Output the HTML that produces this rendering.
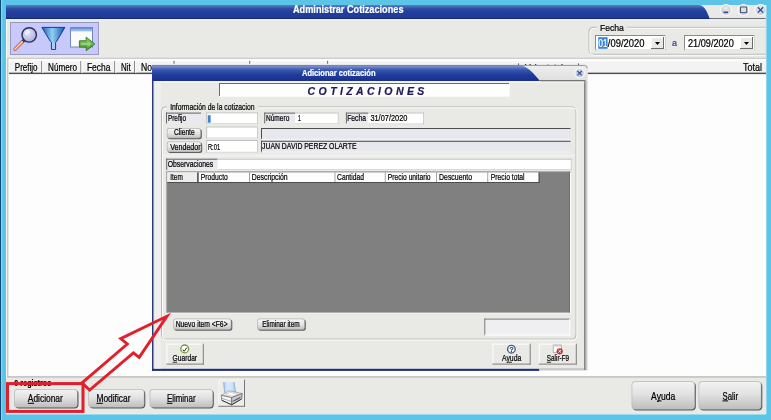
<!DOCTYPE html>
<html><head><meta charset="utf-8"><title>Administrar Cotizaciones</title>
<style>
html,body{margin:0;padding:0;width:771px;height:420px;overflow:hidden;background:#5cc5e7}
svg{display:block;position:absolute;left:0;top:0;will-change:transform}
text{font-family:"Liberation Sans",sans-serif;white-space:pre;stroke:currentColor;stroke-width:0.22px}
</style></head><body>
<svg width="771" height="420" viewBox="0 0 771 420">
<defs>
<linearGradient id="gtb" x1="0" y1="0" x2="0" y2="1"><stop offset="0" stop-color="#5e80be"/><stop offset="0.28" stop-color="#2b4ba4"/><stop offset="0.5" stop-color="#203e9c"/><stop offset="0.88" stop-color="#203c98"/><stop offset="1" stop-color="#12226a"/></linearGradient>
<linearGradient id="gdtb" x1="0" y1="0" x2="0" y2="1"><stop offset="0" stop-color="#5476c8"/><stop offset="0.4" stop-color="#22409e"/><stop offset="1" stop-color="#1b3694"/></linearGradient>
<linearGradient id="gbtn" x1="0" y1="0" x2="0" y2="1"><stop offset="0" stop-color="#f6f6f6"/><stop offset="0.5" stop-color="#e6e6e6"/><stop offset="1" stop-color="#c4c4c4"/></linearGradient>
<linearGradient id="gbig" x1="0" y1="0" x2="0" y2="1"><stop offset="0" stop-color="#f2f2f2"/><stop offset="0.45" stop-color="#e2e2e2"/><stop offset="1" stop-color="#bebebe"/></linearGradient>
<linearGradient id="gfun" x1="0" y1="0" x2="1" y2="0"><stop offset="0" stop-color="#1c5cb4"/><stop offset="0.45" stop-color="#8fd0f4"/><stop offset="1" stop-color="#1a4fa8"/></linearGradient>
<linearGradient id="garr" x1="0" y1="0" x2="0" y2="1"><stop offset="0" stop-color="#8ed06a"/><stop offset="1" stop-color="#3d9a2c"/></linearGradient>
<radialGradient id="glens" cx="0.4" cy="0.35" r="0.75"><stop offset="0" stop-color="#e4e4fa"/><stop offset="1" stop-color="#a6a8dc"/></radialGradient>
<radialGradient id="gcirc" cx="0.5" cy="0.35" r="0.65"><stop offset="0" stop-color="#ececec"/><stop offset="1" stop-color="#c6c6c6"/></radialGradient>
</defs>

<rect x="0" y="0" width="771" height="420" fill="#5cc5e7" />
<rect x="0" y="0" width="1" height="420" fill="#0c4c74" />
<rect x="1" y="0" width="1.2" height="420" fill="#84d6f2" />
<rect x="6" y="5" width="760" height="409" fill="#e9e9e6" />
<rect x="6" y="5" width="760" height="14" fill="url(#gtb)" />
<path d="M699.5 5 C705 6 707 12 710 19 L766 19 L766 5 Z" fill="#e9e9e9"/>
<rect x="710" y="18" width="56" height="1" fill="#6e6e6e" />
<text x="293" y="12.8" font-size="11" fill="#fff" color="#fff" font-weight="bold" font-style="normal" text-anchor="start" textLength="110.5" lengthAdjust="spacingAndGlyphs" >Administrar Cotizaciones</text>
<circle cx="726" cy="10" r="5.5" fill="url(#gcirc)" stroke="#fbfbfb" stroke-width="1.2"/>
<rect x="723.5" y="11.5" width="4.5" height="1.6" fill="#3a4a9a" />
<circle cx="743.5" cy="10" r="5.5" fill="url(#gcirc)" stroke="#fbfbfb" stroke-width="1.2"/>
<rect x="740.5" y="7" width="6.2" height="5.6" fill="#dcdce4" stroke="#4c5478" stroke-width="1"/>
<circle cx="760.5" cy="10" r="5.5" fill="url(#gcirc)" stroke="#fbfbfb" stroke-width="1.2"/>
<path d="M757.9 7.2 L763.1 12.6 M763.1 7.2 L757.9 12.6" stroke="#3646a0" stroke-width="1.3" fill="none"/>
<rect x="6" y="19" width="760" height="2" fill="#e8eef8" />
<rect x="6" y="413" width="760" height="1.4" fill="#f4fafc" />
<rect x="10" y="22" width="89" height="33" fill="#c8c9fb" />
<rect x="10.5" y="22.5" width="88" height="32" fill="none" stroke="#9a9ac0"/>
<path d="M23.2 41 L15 49.3" stroke="#b0644c" stroke-width="3.4" stroke-linecap="round"/>
<path d="M23.2 41 L15 49.3" stroke="#f2a48c" stroke-width="2.2" stroke-linecap="round"/>
<path d="M24.6 39.6 L22.6 41.6" stroke="#3a3a5a" stroke-width="3"/>
<path d="M22.8 41.2 L15.2 48.9" stroke="#fcdccc" stroke-width="0.8" stroke-linecap="round"/>
<circle cx="29.2" cy="34.9" r="7.2" fill="url(#glens)" stroke="#2e2e5e" stroke-width="1.4"/>
<ellipse cx="27.3" cy="32.4" rx="3" ry="2" fill="#ffffff" opacity="0.55" transform="rotate(-35 27.3 32.4)"/>
<path d="M41.9 27.4 L64.9 27.4 L56.6 41.4 L55.6 42.3 L55.6 49.4 L51.4 49.4 L51.4 42.3 L50.4 41.4 Z" fill="url(#gfun)" stroke="#16389a" stroke-width="1"/>
<rect x="52" y="42.6" width="3" height="6.3" fill="#a8d0f4"/>
<rect x="70.5" y="27.5" width="22" height="19.5" fill="#fbfcff" stroke="#6f88c4" stroke-width="1"/>
<rect x="71" y="28" width="21" height="1.8" fill="#6e98d2" />
<rect x="71" y="29.8" width="21" height="1.6" fill="#9dbce6" />
<path d="M79.4 40.8 L86.2 40.8 L86.2 37.2 L94.8 44 L86.2 50.7 L86.2 47.1 L79.4 47.1 Z" fill="url(#garr)" stroke="#3c7c2c" stroke-width="1"/>
<path d="M81 43 L87.5 43 L87.5 41 L91.5 44 L87.5 47 L87.5 45 L81 45 Z" fill="#a4d488" opacity="0.8"/>
<rect x="589" y="27.3" width="190" height="27" rx="4" fill="none" stroke="#b4b4b4"/>
<rect x="590" y="28.3" width="190" height="27" rx="4" fill="none" stroke="#fbfbfb"/>
<rect x="766" y="0" width="5" height="420" fill="#5cc5e7" />
<rect x="765.6" y="5" width="0.9" height="409" fill="#bfe6f4" />
<rect x="597" y="22" width="30" height="10" fill="#e9e9e6" />
<text x="599.9" y="31.4" font-size="9.8" fill="#000" color="#000" font-weight="normal" font-style="normal" text-anchor="start" textLength="24" lengthAdjust="spacingAndGlyphs" >Fecha</text>
<rect x="595" y="35" width="71" height="15.4" fill="#fff" />
<rect x="595" y="35" width="71" height="1" fill="#8a8a8a" />
<rect x="595" y="35" width="1" height="15.4" fill="#8a8a8a" />
<rect x="595" y="49.4" width="71" height="1" fill="#d6d6d6" />
<rect x="665" y="35" width="1" height="15.4" fill="#d6d6d6" />
<rect x="651" y="37" width="13" height="12" fill="#e9e9e6" />
<rect x="651" y="37" width="13" height="1" fill="#fff" />
<rect x="651" y="37" width="1" height="12" fill="#fff" />
<rect x="651" y="48" width="13" height="1" fill="#6a6a6a" />
<rect x="663" y="37" width="1" height="12" fill="#6a6a6a" />
<path d="M655 42 L660 42 L657.5 45 Z" fill="#000"/>
<rect x="598.2" y="37.2" width="9.4" height="11.6" fill="#3f86d4" />
<text x="598.6" y="46.9" font-size="10" fill="#fff" color="#fff" font-weight="normal" font-style="normal" text-anchor="start" textLength="8.8" lengthAdjust="spacingAndGlyphs" >01</text>
<text x="607.8" y="46.9" font-size="10" fill="#000" color="#000" font-weight="normal" font-style="normal" text-anchor="start" textLength="36.7" lengthAdjust="spacingAndGlyphs" >/09/2020</text>
<rect x="684" y="35" width="71" height="15.4" fill="#fff" />
<rect x="684" y="35" width="71" height="1" fill="#8a8a8a" />
<rect x="684" y="35" width="1" height="15.4" fill="#8a8a8a" />
<rect x="684" y="49.4" width="71" height="1" fill="#d6d6d6" />
<rect x="754" y="35" width="1" height="15.4" fill="#d6d6d6" />
<rect x="740" y="37" width="13" height="12" fill="#e9e9e6" />
<rect x="740" y="37" width="13" height="1" fill="#fff" />
<rect x="740" y="37" width="1" height="12" fill="#fff" />
<rect x="740" y="48" width="13" height="1" fill="#6a6a6a" />
<rect x="752" y="37" width="1" height="12" fill="#6a6a6a" />
<path d="M744 42 L749 42 L746.5 45 Z" fill="#000"/>
<text x="688" y="46.9" font-size="10" fill="#000" color="#000" font-weight="normal" font-style="normal" text-anchor="start" textLength="45.8" lengthAdjust="spacingAndGlyphs" >21/09/2020</text>
<text x="672" y="46" font-size="9.5" fill="#3a3aa8" color="#3a3aa8" font-weight="normal" font-style="normal" text-anchor="start" textLength="5" lengthAdjust="spacingAndGlyphs" stroke-width="0">a</text>
<rect x="8" y="58" width="758" height="319" fill="#fdfdfd" />
<rect x="8" y="57.8" width="758" height="0.9" fill="#b8b8b8" />
<rect x="7.4" y="58" width="0.9" height="319" fill="#b4b4b4" />
<rect x="6" y="19" width="1" height="394" fill="#f6fafa" />
<rect x="9" y="60.8" width="757" height="12.4" fill="#f3f3f3" />
<rect x="9" y="60.6" width="757" height="0.8" fill="#ffffff" />
<rect x="9" y="72.2" width="757" height="0.8" fill="#a8a8a8" />
<rect x="9" y="73" width="757" height="1.1" fill="#4e4e4e" />
<rect x="41.3" y="61" width="1" height="12" fill="#6e6e6e" />
<rect x="42.3" y="61" width="1" height="12" fill="#fff" />
<rect x="80.4" y="61" width="1" height="12" fill="#6e6e6e" />
<rect x="81.4" y="61" width="1" height="12" fill="#fff" />
<rect x="114.3" y="61" width="1" height="12" fill="#6e6e6e" />
<rect x="115.3" y="61" width="1" height="12" fill="#fff" />
<rect x="134.2" y="61" width="1" height="12" fill="#6e6e6e" />
<rect x="135.2" y="61" width="1" height="12" fill="#fff" />
<text x="14.8" y="70.5" font-size="10.5" fill="#000" color="#000" font-weight="normal" font-style="normal" text-anchor="start" textLength="22.8" lengthAdjust="spacingAndGlyphs" >Prefijo</text>
<text x="48" y="70.5" font-size="10.5" fill="#000" color="#000" font-weight="normal" font-style="normal" text-anchor="start" textLength="29" lengthAdjust="spacingAndGlyphs" >Número</text>
<text x="86.9" y="70.5" font-size="10.5" fill="#000" color="#000" font-weight="normal" font-style="normal" text-anchor="start" textLength="23.5" lengthAdjust="spacingAndGlyphs" >Fecha</text>
<text x="121" y="70.5" font-size="10.5" fill="#000" color="#000" font-weight="normal" font-style="normal" text-anchor="start" textLength="9.7" lengthAdjust="spacingAndGlyphs" >Nit</text>
<text x="141" y="70.5" font-size="10.5" fill="#000" color="#000" font-weight="normal" font-style="normal" text-anchor="start" textLength="11" lengthAdjust="spacingAndGlyphs" >No</text>
<text x="743" y="70.5" font-size="10.5" fill="#000" color="#000" font-weight="normal" font-style="normal" text-anchor="start" textLength="19" lengthAdjust="spacingAndGlyphs" >Total</text>
<rect x="6" y="377" width="760" height="37" fill="#e9e9e6" />
<rect x="7.4" y="376.4" width="758.6" height="1" fill="#a6a6a6" />
<text x="14.3" y="386.4" font-size="9.6" fill="#000" color="#000" font-weight="bold" font-style="normal" text-anchor="start" textLength="37" lengthAdjust="spacingAndGlyphs" >0 registros</text>
<rect x="15" y="390" width="63.5" height="18.6" rx="4" fill="#565656"/>
<rect x="14" y="389" width="63.5" height="18.6" rx="3.6" fill="#b8b8b8"/>
<rect x="14.7" y="389.7" width="62.3" height="17.400000000000002" rx="3.2" fill="url(#gbig)"/>
<text x="27.8" y="402" font-size="10.5" fill="#000" color="#000" font-weight="normal" font-style="normal" text-anchor="start" textLength="35" lengthAdjust="spacingAndGlyphs" >Adicionar</text>
<rect x="27.8" y="402.8" width="6.3" height="1" fill="#000" />
<rect x="89.3" y="390" width="56" height="18.6" rx="4" fill="#565656"/>
<rect x="88.3" y="389" width="56" height="18.6" rx="3.6" fill="#b8b8b8"/>
<rect x="89.0" y="389.7" width="54.8" height="17.400000000000002" rx="3.2" fill="url(#gbig)"/>
<text x="96.4" y="402" font-size="10.5" fill="#000" color="#000" font-weight="normal" font-style="normal" text-anchor="start" textLength="34.1" lengthAdjust="spacingAndGlyphs" >Modificar</text>
<rect x="96.4" y="402.8" width="6.5" height="1" fill="#000" />
<rect x="150.6" y="390" width="63.2" height="18.6" rx="4" fill="#565656"/>
<rect x="149.6" y="389" width="63.2" height="18.6" rx="3.6" fill="#b8b8b8"/>
<rect x="150.29999999999998" y="389.7" width="62.0" height="17.400000000000002" rx="3.2" fill="url(#gbig)"/>
<text x="166.9" y="402" font-size="10.5" fill="#000" color="#000" font-weight="normal" font-style="normal" text-anchor="start" textLength="28.7" lengthAdjust="spacingAndGlyphs" >Eliminar</text>
<rect x="166.9" y="402.8" width="5.6" height="1" fill="#000" />
<rect x="632.6" y="382.2" width="63.2" height="28.2" rx="4" fill="#565656"/>
<rect x="631.6" y="381.2" width="63.2" height="28.2" rx="3.6" fill="#b8b8b8"/>
<rect x="632.3000000000001" y="381.9" width="62.0" height="27.0" rx="3.2" fill="url(#gbig)"/>
<text x="651.1" y="399.6" font-size="10.5" fill="#000" color="#000" font-weight="normal" font-style="normal" text-anchor="start" textLength="24.1" lengthAdjust="spacingAndGlyphs" >Ayuda</text>
<rect x="657.3000000000001" y="400.40000000000003" width="4.2" height="1" fill="#000" />
<rect x="699.5" y="382.2" width="62.8" height="28.2" rx="4" fill="#565656"/>
<rect x="698.5" y="381.2" width="62.8" height="28.2" rx="3.6" fill="#b8b8b8"/>
<rect x="699.2" y="381.9" width="61.599999999999994" height="27.0" rx="3.2" fill="url(#gbig)"/>
<text x="722.5" y="399.6" font-size="10.5" fill="#000" color="#000" font-weight="normal" font-style="normal" text-anchor="start" textLength="15.5" lengthAdjust="spacingAndGlyphs" >Salir</text>
<rect x="722.5" y="400.40000000000003" width="5.6" height="1" fill="#000" />
<rect x="218.4" y="379.6" width="26.6" height="27" fill="#ededeb" />
<rect x="218.4" y="379.6" width="26.6" height="0.8" fill="#f8f8f8" />
<rect x="218.4" y="379.6" width="0.8" height="27" fill="#f8f8f8" />
<rect x="218.4" y="405.8" width="26.6" height="0.9" fill="#6a6a6a" />
<rect x="244.1" y="379.6" width="0.9" height="27" fill="#6a6a6a" />
<linearGradient id="gpap" x1="0" y1="0" x2="1" y2="0"><stop offset="0" stop-color="#a9c8ea"/><stop offset="0.3" stop-color="#d6e9fb"/><stop offset="0.7" stop-color="#cfe4f9"/><stop offset="1" stop-color="#a4c4e8"/></linearGradient>
<path d="M223.6 382.2 L234 382.2 L235.6 392.5 L224.6 393 Z" fill="url(#gpap)"/>
<path d="M223.6 382.2 L224.6 392.5 M234 382.2 L235.5 392" fill="none" stroke="#86a6cc" stroke-width="0.8"/>
<path d="M221.3 395.3 L229 390.8 L242.2 393.5 L231.7 397.6 Z" fill="#e9e9e9" stroke="#8a8a8a" stroke-width="0.6"/>
<path d="M225.6 394.6 L229.6 392.3 L238.2 394 L232.6 396.2 Z" fill="#fbfbfb" stroke="#b0b0b0" stroke-width="0.4"/>
<path d="M221.3 395.3 L231.7 397.6 L231.7 404.8 L221.8 400.3 Z" fill="#f6f6f6" stroke="#5a5a5a" stroke-width="0.7"/>
<path d="M231.7 397.6 L242.2 393.5 L241.7 398.9 L231.7 404.8 Z" fill="#c9c9c9" stroke="#5a5a5a" stroke-width="0.7"/>
<path d="M221.8 400.3 L231.7 404.8 L241.7 398.9" fill="none" stroke="#333" stroke-width="0.9"/>
<path d="M222 398.3 L231.7 401.6 L242 396.4" fill="none" stroke="#7a7a7a" stroke-width="0.6"/>
<path d="M233.5 401.2 L240 397.6" stroke="#444" stroke-width="0.9"/>
<rect x="173.6" y="60.8" width="0.9" height="3" fill="#5a5a5a" />
<rect x="249.3" y="60.8" width="0.9" height="3" fill="#5a5a5a" />
<rect x="327.2" y="60.8" width="0.9" height="3" fill="#5a5a5a" />
<rect x="518" y="63.4" width="0.9" height="2.2" fill="#4a4a4a" />
<rect x="578" y="63.4" width="0.9" height="2.2" fill="#4a4a4a" />
<text x="525" y="71.6" font-size="10.5" fill="#000" color="#000" font-weight="normal" font-style="normal" text-anchor="start" textLength="38" lengthAdjust="spacingAndGlyphs" >Valor total</text>
<rect x="152" y="65" width="435.5" height="306" fill="#e9e9e6" />
<path d="M152 65 L584.5 65 Q587.5 65 587.5 68 L587.5 371 L152 371 Z" fill="#e9e9e6"/>
<linearGradient id="gdt2" x1="0" y1="0" x2="0" y2="1"><stop offset="0" stop-color="#8fa1d4"/><stop offset="0.3" stop-color="#3a59b0"/><stop offset="0.6" stop-color="#1f3d9e"/><stop offset="1" stop-color="#1a3088"/></linearGradient>
<linearGradient id="ggray" x1="0" y1="0" x2="0" y2="1"><stop offset="0" stop-color="#efefef"/><stop offset="1" stop-color="#dedede"/></linearGradient>
<rect x="152" y="65" width="388" height="16" fill="url(#gdt2)" />
<path d="M517.5 65 C528 65.5 533 73 540 81 L587.5 81 L587.5 68 Q587.5 65 584.5 65 Z" fill="url(#ggray)"/>
<path d="M152 65.4 L584.5 65.4 Q587.2 65.4 587.2 68.4" fill="none" stroke="#7a7c84" stroke-width="0.8"/>
<rect x="540" y="80.2" width="45.5" height="1.3" fill="#5e5e5e" />
<text x="302" y="76.2" font-size="9" fill="#fff" color="#fff" font-weight="bold" font-style="normal" text-anchor="start" textLength="73.5" lengthAdjust="spacingAndGlyphs" >Adicionar cotización</text>
<circle cx="579.6" cy="73.2" r="4.8" fill="#c6d0e2" stroke="#f8f8f8" stroke-width="1.2"/>
<path d="M577.4 71 L581.8 75.4 M581.8 71 L577.4 75.4" stroke="#3c4c8c" stroke-width="1.1" fill="none"/>
<rect x="152" y="81" width="1.5" height="290" fill="#2a3a78" />
<rect x="153.5" y="81" width="0.8" height="288" fill="#9aa2b8" />
<rect x="152" y="368.8" width="387.3" height="2.1" fill="#1d3080" />
<rect x="539.3" y="368.2" width="46" height="2" fill="#c6c6c6" />
<rect x="584.1" y="81" width="1.3" height="289" fill="#7a7a7a" />
<rect x="585.4" y="81" width="1.2" height="289" fill="#a0a0a0" />
<rect x="586.6" y="81" width="1" height="289" fill="#dcdce2" />
<rect x="154.3" y="81.5" width="430" height="1" fill="#fbfbfb" />
<rect x="154.3" y="82.5" width="6.4" height="286" fill="#efefee" />
<rect x="219" y="83" width="291" height="14" fill="#fff" />
<rect x="219" y="83" width="291" height="1" fill="#6a6a6a" />
<rect x="219" y="83" width="1" height="14" fill="#6a6a6a" />
<rect x="219" y="96" width="291" height="1" fill="#f8f8f8" />
<rect x="509" y="83" width="1" height="14" fill="#f8f8f8" />
<text x="307.6" y="94.9" font-size="10.5" fill="#1c1c5c" color="#1c1c5c" font-weight="bold" font-style="italic" text-anchor="start" letter-spacing="3.4">COTIZACIONES</text>
<rect x="161.5" y="106.9" width="414.5" height="232.2" rx="4" fill="none" stroke="#b8b8b8"/>
<rect x="162.5" y="107.9" width="414.5" height="232.2" rx="4" fill="none" stroke="#fcfcfc"/>
<rect x="162.5" y="154.6" width="412" height="2.2" fill="#f1f1ef" />
<rect x="167" y="101" width="91" height="10" fill="#e9e9e6" />
<text x="170.2" y="109.8" font-size="8.6" fill="#000" color="#000" font-weight="normal" font-style="normal" text-anchor="start" textLength="84.4" lengthAdjust="spacingAndGlyphs" >Información de la cotizacion</text>
<rect x="166" y="112.6" width="35" height="10.8" fill="#eaeaee" />
<rect x="166" y="112.6" width="35" height="1" fill="#606060" />
<rect x="166" y="112.6" width="1" height="10.8" fill="#686868" />
<text x="167.9" y="120.8" font-size="8.6" fill="#000" color="#000" font-weight="normal" font-style="normal" text-anchor="start" textLength="18.2" lengthAdjust="spacingAndGlyphs" >Prefijo</text>
<rect x="206.3" y="112.5" width="51.5" height="11.6" fill="#fff" />
<rect x="206.3" y="112.5" width="51.5" height="0.8" fill="#b4b4b4" />
<rect x="206.3" y="112.5" width="0.8" height="11.6" fill="#b4b4b4" />
<rect x="206.3" y="123.3" width="51.5" height="0.8" fill="#d0d0d0" />
<rect x="257.0" y="112.5" width="0.8" height="11.6" fill="#c4c4c4" />
<rect x="207.8" y="115.2" width="2.8" height="7.5" fill="#3f7fd0" />
<rect x="264.2" y="112.6" width="31" height="10.8" fill="#eaeaee" />
<rect x="264.2" y="112.6" width="31" height="1" fill="#606060" />
<rect x="264.2" y="112.6" width="1" height="10.8" fill="#686868" />
<text x="266" y="120.8" font-size="8.6" fill="#000" color="#000" font-weight="normal" font-style="normal" text-anchor="start" textLength="23.3" lengthAdjust="spacingAndGlyphs" >Número</text>
<rect x="295" y="112.6" width="43.6" height="11.5" fill="#fff" />
<rect x="295" y="112.6" width="43.6" height="0.8" fill="#b4b4b4" />
<rect x="295" y="123.3" width="43.6" height="0.8" fill="#d0d0d0" />
<rect x="337.8" y="112.6" width="0.8" height="11.5" fill="#c4c4c4" />
<text x="298" y="121.4" font-size="8.6" fill="#000" color="#000" font-weight="normal" font-style="normal" text-anchor="start" textLength="2.8" lengthAdjust="spacingAndGlyphs" >1</text>
<rect x="345.9" y="112.6" width="22.3" height="10.8" fill="#eaeaee" />
<rect x="345.9" y="112.6" width="22.3" height="1" fill="#606060" />
<rect x="345.9" y="112.6" width="1" height="10.8" fill="#686868" />
<text x="347.2" y="120.8" font-size="8.6" fill="#000" color="#000" font-weight="normal" font-style="normal" text-anchor="start" textLength="18.8" lengthAdjust="spacingAndGlyphs" >Fecha</text>
<rect x="368.2" y="112.6" width="55.8" height="11.7" fill="#fff" />
<rect x="368.2" y="112.6" width="55.8" height="0.8" fill="#b4b4b4" />
<rect x="368.2" y="123.5" width="55.8" height="0.8" fill="#d0d0d0" />
<rect x="423.2" y="112.6" width="0.8" height="11.7" fill="#c4c4c4" />
<text x="370.4" y="121.4" font-size="8.6" fill="#000" color="#000" font-weight="normal" font-style="normal" text-anchor="start" textLength="37" lengthAdjust="spacingAndGlyphs" >31/07/2020</text>
<rect x="167.8" y="129" width="34" height="10.3" rx="2.5" fill="#5e5e5e"/>
<rect x="166.8" y="128" width="34" height="10.3" rx="2.5" fill="#b4b4b4"/>
<rect x="167.5" y="128.7" width="32.6" height="8.9" rx="2.0" fill="url(#gbtn)"/>
<text x="173.9" y="135.3" font-size="8.6" fill="#000" color="#000" font-weight="normal" font-style="normal" text-anchor="start" textLength="20.8" lengthAdjust="spacingAndGlyphs" >Cliente</text>
<rect x="206.3" y="126.6" width="51.5" height="11.8" fill="#fff" />
<rect x="206.3" y="126.6" width="51.5" height="0.8" fill="#b4b4b4" />
<rect x="206.3" y="126.6" width="0.8" height="11.8" fill="#b4b4b4" />
<rect x="206.3" y="137.6" width="51.5" height="0.8" fill="#d0d0d0" />
<rect x="257.0" y="126.6" width="0.8" height="11.8" fill="#c4c4c4" />
<rect x="261" y="128" width="309.5" height="11.6" fill="#e7e7ee" />
<rect x="261" y="128" width="309.5" height="1" fill="#4e4e4e" />
<rect x="261" y="128" width="1" height="11.6" fill="#4e4e4e" />
<rect x="261" y="138.79999999999998" width="309.5" height="0.8" fill="#f8f8f8" />
<rect x="167.8" y="142.5" width="34.4" height="10.6" rx="2.5" fill="#5e5e5e"/>
<rect x="166.8" y="141.5" width="34.4" height="10.6" rx="2.5" fill="#b4b4b4"/>
<rect x="167.5" y="142.2" width="33.0" height="9.2" rx="2.0" fill="url(#gbtn)"/>
<text x="170.2" y="149.7" font-size="8.6" fill="#000" color="#000" font-weight="normal" font-style="normal" text-anchor="start" textLength="30.4" lengthAdjust="spacingAndGlyphs" >Vendedor</text>
<rect x="206.3" y="140.2" width="51.5" height="12.4" fill="#fff" />
<rect x="206.3" y="140.2" width="51.5" height="0.8" fill="#b4b4b4" />
<rect x="206.3" y="140.2" width="0.8" height="12.4" fill="#b4b4b4" />
<rect x="206.3" y="151.79999999999998" width="51.5" height="0.8" fill="#d0d0d0" />
<rect x="257.0" y="140.2" width="0.8" height="12.4" fill="#c4c4c4" />
<text x="207.9" y="149.7" font-size="8.6" fill="#000" color="#000" font-weight="normal" font-style="normal" text-anchor="start" textLength="12.2" lengthAdjust="spacingAndGlyphs" >R:01</text>
<rect x="261" y="140.8" width="309.5" height="11.6" fill="#e7e7ee" />
<rect x="261" y="140.8" width="309.5" height="1" fill="#4e4e4e" />
<rect x="261" y="140.8" width="1" height="11.6" fill="#4e4e4e" />
<rect x="261" y="151.6" width="309.5" height="0.8" fill="#f8f8f8" />
<text x="262" y="148.8" font-size="8.6" fill="#000" color="#000" font-weight="normal" font-style="normal" text-anchor="start" textLength="94.5" lengthAdjust="spacingAndGlyphs" >JUAN DAVID PEREZ OLARTE</text>
<rect x="166.2" y="158.7" width="51.4" height="11.2" fill="#eaeaee" />
<rect x="166.2" y="158.7" width="51.4" height="1" fill="#606060" />
<rect x="166.2" y="158.7" width="1" height="11.2" fill="#686868" />
<text x="167.7" y="167.1" font-size="8.6" fill="#000" color="#000" font-weight="normal" font-style="normal" text-anchor="start" textLength="45.6" lengthAdjust="spacingAndGlyphs" >Observaciones</text>
<rect x="217.6" y="158.8" width="354" height="11.2" fill="#fff" />
<rect x="217.6" y="158.8" width="354" height="0.8" fill="#b4b4b4" />
<rect x="217.6" y="169.2" width="354" height="0.8" fill="#d0d0d0" />
<rect x="570.8000000000001" y="158.8" width="0.8" height="11.2" fill="#c4c4c4" />
<rect x="166.6" y="171.6" width="404.6" height="141.8" fill="#fbfbfb" />
<rect x="166.6" y="171.6" width="403.4" height="141" fill="#808080" />
<rect x="569.2" y="172.4" width="0.8" height="140.2" fill="#6c6c6c" />
<rect x="166.6" y="171.6" width="404.2" height="0.8" fill="#8c8c8c" />
<rect x="166.6" y="171.6" width="0.8" height="141.4" fill="#8c8c8c" />
<rect x="167.3" y="172.4" width="371.5" height="9.8" fill="#fdfdfd" />
<rect x="167.3" y="182" width="372" height="0.8" fill="#3a3a3a" />
<text x="170.3" y="180.4" font-size="8.6" fill="#000" color="#000" font-weight="normal" font-style="normal" text-anchor="start" textLength="12.5" lengthAdjust="spacingAndGlyphs" >Item</text>
<rect x="197.8" y="172.4" width="0.9" height="9.6" fill="#9a9a9a" />
<text x="200.8" y="180.4" font-size="8.6" fill="#000" color="#000" font-weight="normal" font-style="normal" text-anchor="start" textLength="27" lengthAdjust="spacingAndGlyphs" >Producto</text>
<rect x="249.0" y="172.4" width="0.9" height="9.6" fill="#9a9a9a" />
<text x="251.8" y="180.4" font-size="8.6" fill="#000" color="#000" font-weight="normal" font-style="normal" text-anchor="start" textLength="35.9" lengthAdjust="spacingAndGlyphs" >Descripción</text>
<rect x="334.5" y="172.4" width="0.9" height="9.6" fill="#9a9a9a" />
<text x="337.1" y="180.4" font-size="8.6" fill="#000" color="#000" font-weight="normal" font-style="normal" text-anchor="start" textLength="26.8" lengthAdjust="spacingAndGlyphs" >Cantidad</text>
<rect x="384.8" y="172.4" width="0.9" height="9.6" fill="#9a9a9a" />
<text x="387.8" y="180.4" font-size="8.6" fill="#000" color="#000" font-weight="normal" font-style="normal" text-anchor="start" textLength="42.8" lengthAdjust="spacingAndGlyphs" >Precio unitario</text>
<rect x="436.1" y="172.4" width="0.9" height="9.6" fill="#9a9a9a" />
<text x="439.1" y="180.4" font-size="8.6" fill="#000" color="#000" font-weight="normal" font-style="normal" text-anchor="start" textLength="33" lengthAdjust="spacingAndGlyphs" >Descuento</text>
<rect x="487.3" y="172.4" width="0.9" height="9.6" fill="#9a9a9a" />
<text x="490.8" y="180.4" font-size="8.6" fill="#000" color="#000" font-weight="normal" font-style="normal" text-anchor="start" textLength="33.7" lengthAdjust="spacingAndGlyphs" >Precio total</text>
<rect x="538.6" y="172.4" width="0.9" height="10.4" fill="#3a3a3a" />
<rect x="167.3" y="172.4" width="30.6" height="9.6" fill="#ededed" />
<text x="170.3" y="180.4" font-size="8.6" fill="#000" color="#000" font-weight="normal" font-style="normal" text-anchor="start" textLength="12.5" lengthAdjust="spacingAndGlyphs" >Item</text>
<rect x="197.2" y="172.4" width="1.2" height="9.8" fill="#3a3a3a" />
<rect x="174.3" y="319.6" width="58" height="11.2" rx="2.5" fill="#5e5e5e"/>
<rect x="173.3" y="318.6" width="58" height="11.2" rx="2.5" fill="#b4b4b4"/>
<rect x="174.0" y="319.3" width="56.6" height="9.799999999999999" rx="2.0" fill="url(#gbtn)"/>
<text x="175.7" y="326.8" font-size="8.6" fill="#000" color="#000" font-weight="normal" font-style="normal" text-anchor="start" textLength="51.9" lengthAdjust="spacingAndGlyphs" >Nuevo item &lt;F6&gt;</text>
<rect x="258.1" y="319.6" width="47.7" height="11.2" rx="2.5" fill="#5e5e5e"/>
<rect x="257.1" y="318.6" width="47.7" height="11.2" rx="2.5" fill="#b4b4b4"/>
<rect x="257.8" y="319.3" width="46.300000000000004" height="9.799999999999999" rx="2.0" fill="url(#gbtn)"/>
<text x="262.3" y="326.8" font-size="8.6" fill="#000" color="#000" font-weight="normal" font-style="normal" text-anchor="start" textLength="37.3" lengthAdjust="spacingAndGlyphs" >Eliminar item</text>
<rect x="484.3" y="318.6" width="86" height="17" fill="#efeff2" />
<rect x="484.3" y="318.6" width="86" height="1" fill="#7a7a7a" />
<rect x="484.3" y="318.6" width="1" height="17" fill="#7a7a7a" />
<rect x="484.3" y="334.6" width="86" height="1" fill="#fcfcfc" />
<rect x="569.3" y="318.6" width="1" height="17" fill="#fcfcfc" />
<rect x="166.4" y="343.6" width="37.4" height="21" fill="#e9e9e6" />
<rect x="166.4" y="343.6" width="37.4" height="1" fill="#fdfdfd" />
<rect x="166.4" y="343.6" width="1" height="21" fill="#fdfdfd" />
<rect x="166.4" y="363.6" width="37.4" height="1" fill="#7e7e7e" />
<rect x="202.8" y="343.6" width="1" height="21" fill="#7e7e7e" />
<text x="172.6" y="360.9" font-size="8.6" fill="#000" color="#000" font-weight="normal" font-style="normal" text-anchor="start" textLength="24.5" lengthAdjust="spacingAndGlyphs" >Guardar</text>
<rect x="172.6" y="361.8" width="4.6" height="0.8" fill="#000" />
<rect x="492.4" y="343.6" width="38.3" height="21" fill="#e9e9e6" />
<rect x="492.4" y="343.6" width="38.3" height="1" fill="#fdfdfd" />
<rect x="492.4" y="343.6" width="1" height="21" fill="#fdfdfd" />
<rect x="492.4" y="363.6" width="38.3" height="1" fill="#7e7e7e" />
<rect x="529.6999999999999" y="343.6" width="1" height="21" fill="#7e7e7e" />
<text x="502" y="360.9" font-size="8.6" fill="#000" color="#000" font-weight="normal" font-style="normal" text-anchor="start" textLength="19.3" lengthAdjust="spacingAndGlyphs" >Ayuda</text>
<rect x="508.3" y="361.8" width="3.6" height="0.8" fill="#000" />
<rect x="538.8" y="343.6" width="38" height="21" fill="#e9e9e6" />
<rect x="538.8" y="343.6" width="38" height="1" fill="#fdfdfd" />
<rect x="538.8" y="343.6" width="1" height="21" fill="#fdfdfd" />
<rect x="538.8" y="363.6" width="38" height="1" fill="#7e7e7e" />
<rect x="575.8" y="343.6" width="1" height="21" fill="#7e7e7e" />
<text x="546.8" y="360.9" font-size="8.6" fill="#000" color="#000" font-weight="normal" font-style="normal" text-anchor="start" textLength="22.3" lengthAdjust="spacingAndGlyphs" >Salir-F9</text>
<rect x="546.8" y="361.8" width="4.3" height="0.8" fill="#000" />
<circle cx="184.7" cy="348.9" r="3.9" fill="#fcfff8" stroke="#72983e" stroke-width="1.3"/>
<path d="M182.7 349.6 L184.2 351.3 L186.9 347.6" stroke="#20301a" stroke-width="1" fill="none"/>
<circle cx="511.4" cy="349.2" r="3.8" fill="#fbfdff" stroke="#3c5c88" stroke-width="1.3"/>
<text x="509.5" y="351.8" font-size="6.8" fill="#2c4c80" color="#2c4c80" font-weight="bold" font-style="normal" text-anchor="start" >?</text>
<rect x="553.2" y="345" width="8.2" height="7.6" fill="#fdfdfd" stroke="#9a9a9a" stroke-width="0.7"/>
<rect x="553.2" y="345" width="8.2" height="1.4" fill="#c8c8c8" />
<circle cx="559.7" cy="351.3" r="3.1" fill="#d42c30"/>
<path d="M558.4 350 L561 352.6 M561 350 L558.4 352.6" stroke="#fff" stroke-width="0.9"/>
<rect x="7.5" y="383.6" width="75.5" height="27.8" fill="none" stroke="#dc202e" stroke-width="3"/>
<path d="M166.9 316.3 L120.7 338.6 L127.3 344 L82 382.8 L89.6 390 L133.4 352.8 L139.2 357.4 Z" fill="none" stroke="#e2202c" stroke-width="2.9" stroke-linejoin="miter"/>
</svg></body></html>
